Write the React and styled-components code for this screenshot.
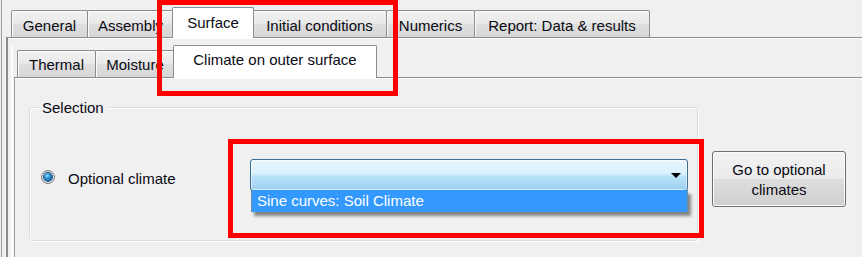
import React from 'react';
import styled, { createGlobalStyle } from 'styled-components';

const GlobalStyle = createGlobalStyle`
  html, body { margin: 0; background: #f0f0f0; }
  * { box-sizing: border-box; }
`;

const Screen = styled.div`
  position: relative;
  width: 862px;
  height: 257px;
  overflow: hidden;
  font-family: "Liberation Sans", Arial, sans-serif;
  font-size: 15px;
  line-height: 17px;
  color: #0a0a14;
`;

const Window = styled.div`
  height: 100%;
  margin-left: 1px;
  border-left: 1px solid #9b9b9b;
  padding-left: 4px;
  display: flex;
  flex-direction: column;
`;

const TabStrip = styled.div`
  display: flex;
  align-items: flex-end;
  height: ${p => p.$h}px;
  margin-top: ${p => p.$top}px;
  padding-left: ${p => p.$left}px;
  flex-shrink: 0;
`;

const Tab = styled.div`
  position: relative;
  z-index: ${p => (p.$active ? 2 : 1)};
  width: ${p => p.$w}px;
  height: ${p => (p.$active ? p.$tall : 27)}px;
  margin-left: ${p => p.$ml}px;
  margin-right: ${p => (p.$active ? -2 : 0)}px;
  margin-bottom: ${p => (p.$active ? -1 : 0)}px;
  padding-top: ${p => p.$pad}px;
  border: 1px solid #898c95;
  border-bottom: none;
  border-radius: 2px 2px 0 0;
  background: ${p => (p.$active ? '#ffffff' : 'linear-gradient(#f2f2f2, #e8e8e8 50%, #dfdfdf 51%, #d6d6d6)')};
  box-shadow: ${p => (p.$active ? 'none' : 'inset 1px 1px 0 #fbfbfb')};
  text-align: center;
  white-space: nowrap;
`;

const OuterPanel = styled.div`
  flex: 1;
  display: flex;
  border-top: 1px solid #898c95;
  border-left: 2px solid #8b8b8b;
  box-shadow: inset 0 1px 0 #ffffff;
  padding: 7px 0 0 3px;
`;

const InnerWrap = styled.div`
  flex: 1;
  display: flex;
  flex-direction: column;
  border-left: 2px solid #ffffff;
  padding-left: 1px;
`;

const InnerPanel = styled.div`
  flex: 1;
  display: flex;
  align-items: flex-start;
  border-top: 1px solid #898c95;
  border-left: 1px solid #a0a0a0;
  box-shadow: inset 0 1px 0 #ffffff;
  padding: 29px 0 0 14px;
`;

const GroupBox = styled.div`
  position: relative;
  width: 669px;
  height: 134px;
  border: 1px solid #d5dfe5;
  border-radius: 3px;
  box-shadow: inset 1px 1px 0 #ffffff, 1px 1px 0 #ffffff;
  padding: 51px 9px 0 11px;
`;

const Legend = styled.span`
  position: absolute;
  top: -9px;
  left: 9px;
  padding: 0 3px;
  background: #f0f0f0;
`;

const Row = styled.div`
  display: flex;
  align-items: flex-start;
`;

const Radio = styled.span`
  display: flex;
  align-items: center;
  justify-content: center;
  width: 14px;
  height: 14px;
  margin-top: 11px;
  border-radius: 50%;
  border: 1px solid #7b7d80;
  background: linear-gradient(135deg, #c4c4c4, #eeeeee 70%, #ffffff);
  box-shadow: inset 0 0 0 1px #e9e9e9;
`;

const RadioDot = styled.span`
  width: 8px;
  height: 8px;
  border-radius: 50%;
  background: radial-gradient(circle at 40% 35%, #8fdcff 0%, #2b8ad0 40%, #0a3f70 100%);
  box-shadow: 0 0 0 1px #1e4f7a;
`;

const RadioLabel = styled.span`
  width: 182px;
  margin: 11px 0 0 13px;
`;

const ComboWrap = styled.div`
  position: relative;
  width: 438px;
  height: 32px;
`;

const Combo = styled.div`
  height: 100%;
  display: flex;
  align-items: center;
  justify-content: flex-end;
  padding-right: 6px;
  border: 1px solid #3c6e95;
  border-radius: 3px;
  background: linear-gradient(#eaf6fd 0%, #d9f0fc 45%, #b9e2f9 55%, #9ccff0 100%);
  box-shadow: inset 0 0 0 1px rgba(255, 255, 255, 0.55);
`;

const Arrow = styled.span`
  width: 0;
  height: 0;
  border-left: 5px solid transparent;
  border-right: 5px solid transparent;
  border-top: 5px solid #000000;
`;

const DropList = styled.div`
  position: absolute;
  top: 31px;
  left: 1px;
  right: 0;
  height: 22px;
  padding-left: 5px;
  line-height: 22px;
  color: #ffffff;
  background: #3399ff;
  border-left: 1px solid #6f8fa8;
  border-right: 1px solid #6f8fa8;
  box-shadow: 3px 4px 3px rgba(0, 0, 0, 0.45);
`;

const Button = styled.div`
  width: 134px;
  height: 56px;
  margin: 44px 0 0 14px;
  padding-top: 1px;
  display: flex;
  flex-direction: column;
  align-items: center;
  justify-content: center;
  line-height: 20px;
  border: 1px solid #707070;
  border-radius: 3px;
  background: linear-gradient(#f2f2f2 0%, #ebebeb 50%, #dddddd 51%, #cfcfcf 100%);
  box-shadow: inset 0 0 0 1px #fbfbfb;
`;

const Mark = styled.div`
  position: absolute;
  left: ${p => p.$x}px;
  top: ${p => p.$y}px;
  width: ${p => p.$w}px;
  height: ${p => p.$h}px;
  border: 5px solid #ff0000;
  pointer-events: none;
  z-index: 10;
`;

const outerTabs = [
  { label: 'General', w: 77, ml: 0 },
  { label: 'Assembly', w: 87, ml: -1 },
  { label: 'Surface', w: 82, ml: -2, active: true },
  { label: 'Initial conditions', w: 135, ml: 0 },
  { label: 'Numerics', w: 89, ml: -1 },
  { label: 'Report: Data & results', w: 176, ml: -1 },
];

const innerTabs = [
  { label: 'Thermal', w: 79, ml: 0 },
  { label: 'Moisture', w: 80, ml: -1 },
  { label: 'Climate on outer surface', w: 204, ml: -2, active: true },
];

export default function App() {
  return (
    <Screen>
      <GlobalStyle />
      <Window>
        <TabStrip $h={30} $top={7} $left={5}>
          {outerTabs.map(t => (
            <Tab key={t.label} $w={t.w} $ml={t.ml} $active={t.active} $tall={31} $pad={6}>
              {t.label}
            </Tab>
          ))}
        </TabStrip>
        <OuterPanel>
          <InnerWrap>
            <TabStrip $h={32} $top={0} $left={3}>
              {innerTabs.map(t => (
                <Tab key={t.label} $w={t.w} $ml={t.ml} $active={t.active} $tall={33} $pad={5}>
                  {t.label}
                </Tab>
              ))}
            </TabStrip>
            <InnerPanel>
              <GroupBox>
                <Legend>Selection</Legend>
                <Row>
                  <Radio>
                    <RadioDot />
                  </Radio>
                  <RadioLabel>Optional climate</RadioLabel>
                  <ComboWrap>
                    <Combo>
                      <Arrow />
                    </Combo>
                    <DropList>Sine curves: Soil Climate</DropList>
                  </ComboWrap>
                </Row>
              </GroupBox>
              <Button>
                <span>Go to optional</span>
                <span>climates</span>
              </Button>
            </InnerPanel>
          </InnerWrap>
        </OuterPanel>
      </Window>
      <Mark $x={157} $y={0} $w={241} $h={96} />
      <Mark $x={228} $y={139} $w={476} $h={99} />
    </Screen>
  );
}
